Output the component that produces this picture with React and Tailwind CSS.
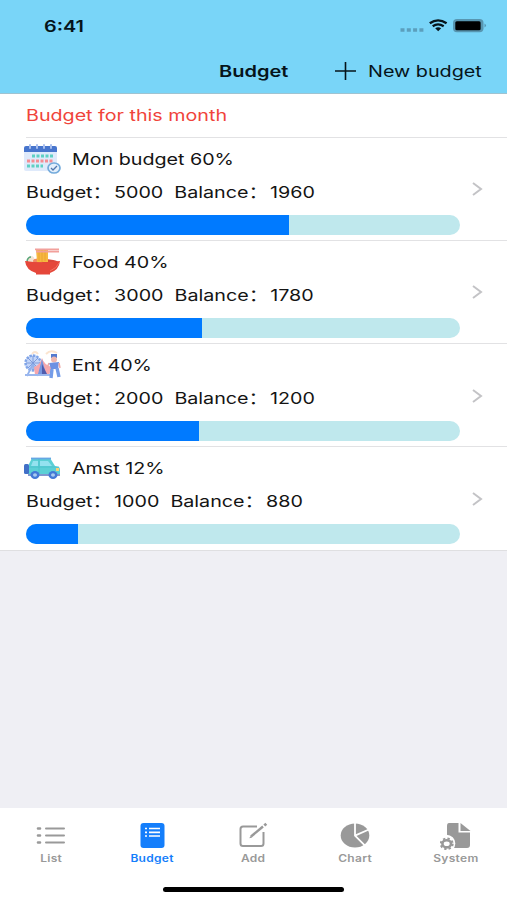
const budgets = [
  { name: "Mon budget", percent: 60, budget: 5000, balance: 1960, fill: 60.8, Icon: CalendarIcon },
  { name: "Food", percent: 40, budget: 3000, balance: 1780, fill: 40.7, Icon: NoodlesIcon },
  { name: "Ent", percent: 40, budget: 2000, balance: 1200, fill: 40, Icon: FairIcon },
  { name: "Amst", percent: 12, budget: 1000, balance: 880, fill: 12, Icon: CarIcon },
];

const tabs = [
  { label: "List", Icon: ListIcon },
  { label: "Budget", Icon: BudgetIcon, active: true },
  { label: "Add", Icon: AddIcon },
  { label: "Chart", Icon: ChartIcon },
  { label: "System", Icon: SystemIcon },
];

function CalendarIcon() {
  return (
    <svg viewBox="0 0 38 30" className="w-[38px] h-[30px]">
      <rect x="1" y="3" width="33" height="24" rx="2" fill="#dfeafb" />
      <path d="M1 8V4q0-2 2-2h29q2 0 2 2v4z" fill="#4775cd" />
      <path d="M7 1v3M14 1v3M21 1v3M28 1v3" stroke="#a9bfee" strokeWidth="2" strokeLinecap="round" />
      <path d="M9 12h21" stroke="#5fd0c4" strokeWidth="3" strokeDasharray="3 1.5" />
      <path d="M4 17h26" stroke="#f58d94" strokeWidth="3" strokeDasharray="3 1.5" />
      <path d="M4 22h16" stroke="#5fd0c4" strokeWidth="3" strokeDasharray="3 1.5" />
      <ellipse cx="31" cy="24" rx="6" ry="5" fill="#e3effb" stroke="#73aadb" strokeWidth="1.7" />
      <path d="m28 24 2 2 4-4" fill="none" stroke="#5277ad" strokeWidth="1.3" />
    </svg>
  );
}

function NoodlesIcon() {
  return (
    <svg viewBox="0 0 38 30" className="w-[38px] h-[30px]">
      <ellipse cx="19" cy="15" rx="16" ry="3" fill="#d9473a" />
      <circle cx="8" cy="12.500" r="3.500" fill="#f4e3d2" />
      <path d="M4 14q1-4 4-4" fill="none" stroke="#57a77b" strokeWidth="1.500" />
      <ellipse cx="15" cy="14" rx="5" ry="2.500" fill="#f08b62" />
      <path d="M13 2h12v13H14z" fill="#f7b83f" />
      <path d="M16 3v11M19 3v12M22 3v11" stroke="#e9a033" strokeWidth=".8" />
      <path d="M12 2.300h24M13 4.600h23" stroke="#f2a09b" strokeWidth="1.800" />
      <path d="M2 14q17 2.500 35 0-1 9-10 12v1.500H13V26Q3 23 2 14z" fill="#e5473a" />
      <path d="M27 24q7-3 9-8" fill="none" stroke="#f07262" />
    </svg>
  );
}

function FairIcon() {
  return (
    <svg viewBox="0 0 38 30" className="w-[38px] h-[30px]">
      <path d="M9 4q3-4 6 0M23 4q5-5 11-1" stroke="#fbe4cf" strokeWidth="2" fill="none" />
      <circle cx="10" cy="13" r="7.500" fill="#c3d5f8" stroke="#80a5e8" strokeWidth="2.400" strokeDasharray="2.500 1" />
      <path d="M10 6v14M3 13h14M5 8l10 10M15 8 5 18" stroke="#7795d8" strokeWidth=".9" />
      <path d="m10 14-6 12M10 14l5 12" stroke="#91b1ec" strokeWidth="1.700" />
      <path d="M11 17q6-2 8-9 2 7 10 9l-3 8H12z" fill="#f6a7ad" />
      <path d="m19 9-4 15h8z" fill="#7796df" />
      <path d="M19 14v10h5z" fill="#505cad" />
      <path d="M2 25h25" stroke="#9bb7ee" strokeWidth="2" />
      <path d="M28 4h6v4h-6z" fill="#537acf" />
      <circle cx="31" cy="9.500" r="3" fill="#eeb6ae" />
      <path d="m26 13 10-1-1 7H28z" fill="#6c91e3" />
      <path d="m29 19-1 9M34 18l2 9" stroke="#749ce8" strokeWidth="3.400" />
      <path d="m26 13-2 5M36 13l1 5" stroke="#eeaaa7" strokeWidth="1.500" />
    </svg>
  );
}

function CarIcon() {
  return (
    <svg viewBox="0 0 38 30" className="w-[38px] h-[30px]">
      <path d="M5 13 9 5h18l5 8 4 1q1 1 1 3v5H5z" fill="#5bd0d5" />
      <path d="M8 5.500h20" stroke="#65a7e3" strokeWidth="1.800" />
      <path d="m10 8-2 5h7V8zM17 8v5h12l-4-5z" fill="#94e2ef" />
      <path d="M16 6v16M6 14h30" stroke="#45b9ca" strokeWidth=".6" />
      <rect x="1" y="11" width="5" height="10" rx="1.500" fill="#416fc7" />
      <path d="M5 21h32v2H5z" fill="#8099cf" />
      <path d="M33 15h3v3h-3z" fill="#f7d279" />
      <ellipse cx="12" cy="22" rx="4.500" ry="4" fill="#4379d6" />
      <ellipse cx="30" cy="22" rx="4.500" ry="4" fill="#4379d6" />
      <ellipse cx="12" cy="22" rx="2" ry="1.700" fill="#a8caef" />
      <ellipse cx="30" cy="22" rx="2" ry="1.700" fill="#a8caef" />
    </svg>
  );
}

function ListIcon() {
  return (
    <svg viewBox="0 0 32 28" className="w-8 h-7" stroke="currentColor" strokeWidth="2" strokeLinecap="round">
      <path d="M3 6.500h2M3 13.500h2M3 20.500h2" strokeWidth="2.600" />
      <path d="M11 6.500h18M11 13.500h18M11 20.500h18" />
    </svg>
  );
}

function BudgetIcon() {
  return (
    <svg viewBox="0 0 32 28" className="w-8 h-7">
      <rect x="4.500" y="1" width="24" height="25" rx="3" fill="currentColor" />
      <path d="M9 6.500h2M9 10.300h2M9 14h2M13 6.500h11M13 10.300h11M13 14h11" stroke="#fff" strokeWidth="1.700" />
    </svg>
  );
}

function AddIcon() {
  return (
    <svg viewBox="0 0 32 28" className="w-8 h-7" fill="none" stroke="currentColor" strokeWidth="2">
      <path d="M20 4.500H6Q3.500 4.500 3.500 7v14.500Q3.500 24 6 24h18q2.500 0 2.500-2.500V10" />
      <path d="m14 14.500 12-10" strokeWidth="2.400" />
      <path d="m27.300 3.500 2-1.700" strokeWidth="2.800" />
      <path d="m12.300 16.300 2.900-.7-1.700-1.700z" fill="currentColor" stroke="none" />
    </svg>
  );
}

function ChartIcon() {
  return (
    <svg viewBox="0 0 32 28" className="w-8 h-7">
      <ellipse cx="16" cy="13.600" rx="14.300" ry="12" fill="currentColor" />
      <path d="M16 0v13.600l10 10M16 13.600 31 7" fill="none" stroke="#fff" strokeWidth="1.800" />
    </svg>
  );
}

function SystemIcon() {
  return (
    <svg viewBox="0 0 32 28" className="w-8 h-7" fill="currentColor">
      <path d="M9 1h9.500v9.500H30V23q0 3-3 3H7V4q0-3 2-3z" />
      <path d="m20.500 1 10 8h-10z" />
      <circle cx="6.500" cy="21.500" r="8.800" fill="#fff" />
      <ellipse cx="6.700" cy="21.800" rx="4.300" ry="3.600" fill="none" stroke="currentColor" strokeWidth="2.600" />
      <ellipse cx="6.700" cy="21.800" rx="6" ry="5.300" fill="none" stroke="currentColor" strokeWidth="2" strokeDasharray="2.300 2.150" />
    </svg>
  );
}

function StatusBar() {
  return (
    <div className="h-[50px] pl-11 pr-[20px] pt-px flex items-center justify-between">
      <span className="origin-left scale-x-[1.24] text-base font-semibold">6:41</span>
      <svg viewBox="0 0 88 20" className="w-[88px] h-5">
        <path d="M1.500 14h23" stroke="#5b9fbd" strokeWidth="3.400" strokeDasharray="4 2.300" />
        <g fill="none" stroke="#06141a" strokeWidth="2.300">
          <path d="M30.800 7.300q8.200-6 16.800 0" />
          <path d="M33.700 10.300q5.300-3.700 11 0" />
        </g>
        <path d="M36.200 12.200q3-2 6 0l-3 3z" fill="#06141a" />
        <rect x="54" y="3" width="30.500" height="13.300" rx="4" fill="#5796b1" />
        <rect x="56.300" y="5.300" width="25.300" height="8.900" rx="1.500" fill="#000" />
        <path d="M85.500 7.500q3 2 0 4z" fill="#5796b1" />
      </svg>
    </div>
  );
}

function BudgetRow({ item }) {
  const { name, percent, budget, balance, fill, Icon } = item;

  return (
    <li className="group h-[103.3px] pl-[26px] last:border-b last:border-[#dfdfe1]">
      <div className="h-full pt-[5px] border-b border-[#e2e2e4] group-last:border-b-0 flex">
        <div className="w-[434px] -ml-[0.5px]">
          <div className="h-[32px] -ml-[3px] flex items-center gap-[11px]">
            <Icon />
            <span className="origin-left scale-x-[1.23] whitespace-nowrap">
              {name} {percent}%
            </span>
          </div>
          <p className="h-[34px] leading-[34px] w-fit origin-left scale-x-[1.23] flex gap-[9px]">
            <span className="flex gap-[1.5px]">
              <span>Budget：</span>
              <span>{budget}</span>
            </span>
            <span className="flex gap-[1.5px]">
              <span>Balance：</span>
              <span>{balance}</span>
            </span>
          </p>
          <div className="mt-[6px] h-5 rounded-full overflow-hidden bg-[#bfe8ed]">
            <div className="h-full bg-[#007aff]" style={{ width: `${fill}%` }} />
          </div>
        </div>
        <svg viewBox="0 0 12 14" className="w-3 h-3.5 ml-[11px] mt-[39.5px]" fill="none" stroke="#c3c3c6" strokeWidth="2">
          <path d="m2 1 8 6-8 6" />
        </svg>
      </div>
    </li>
  );
}

export default function App() {
  return (
    <div className="w-[507px] h-[900px] overflow-hidden flex flex-col bg-[#efeff4] text-[#141414] text-base font-['Inter','Noto_Sans_CJK_SC',sans-serif]">
      <header className="h-[94px] shrink-0 bg-[#79d5f8] border-b border-[#9fc3d1] text-[#06141a]">
        <StatusBar />
        <div className="h-[42px] grid grid-cols-[219px_116px_1fr] items-center">
          <h1 className="col-start-2 w-fit origin-left scale-x-[1.25] font-semibold">Budget</h1>
          <button className="flex items-center gap-[12px]">
            <svg viewBox="0 0 21 18" className="w-[21px] h-[18px]" stroke="currentColor" strokeWidth="1.600">
              <path d="M0 9h21M10.500 0v18" />
            </svg>
            <span className="origin-left scale-x-[1.235] whitespace-nowrap">New budget</span>
          </button>
        </div>
      </header>

      <main className="flex-1">
        <div className="bg-white">
          <div className="h-[43.6px] pl-[26px]">
            <h2 className="h-full leading-[43px] border-b border-[#e2e2e4] text-[#f0443b]">
              <span className="inline-block origin-left scale-x-[1.23]">Budget for this month</span>
            </h2>
          </div>
          <ul>
            {budgets.map((item) => (
              <BudgetRow key={item.name} item={item} />
            ))}
          </ul>
        </div>
      </main>

      <footer className="h-[92px] shrink-0 bg-white flex flex-col items-center">
        <nav className="w-full h-[79px] pt-[14px] grid grid-cols-5">
          {tabs.map(({ label, Icon, active }) => (
            <button
              key={label}
              className={`flex flex-col items-center justify-start ${active ? "text-[#147efb]" : "text-[#999]"}`}
            >
              <Icon />
              <span className="mt-px scale-x-[1.2] text-[10px] leading-[14px] font-semibold tracking-wide">{label}</span>
            </button>
          ))}
        </nav>
        <div className="w-[181px] h-[5px] rounded-full bg-black" />
      </footer>
    </div>
  );
}
